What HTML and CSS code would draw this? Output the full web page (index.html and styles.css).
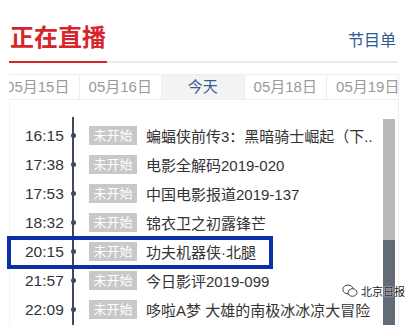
FILE: index.html
```html
<!DOCTYPE html>
<html lang="zh">
<head>
<meta charset="UTF-8">
<meta name="viewport" content="width=device-width, initial-scale=1.0">
<title>正在直播</title>
<link rel="stylesheet" href="styles.css">
</head>
<body>
<header class="top">
  <h1 class="title">正在直播</h1>
  <a class="guide">节目单</a>
</header>
<div class="tabs">
  <div class="tabs-inner">
    <div class="tab">05月15日</div>
    <div class="tab">05月16日</div>
    <div class="tab active">今天</div>
    <div class="tab">05月18日</div>
    <div class="tab">05月19日</div>
  </div>
</div>
<div class="list">
  <div class="row"><span class="time">16:15</span><span class="tag">未开始</span><span class="name">蝙蝠侠前传3：黑暗骑士崛起（下..</span></div>
  <div class="row"><span class="time">17:38</span><span class="tag">未开始</span><span class="name">电影全解码2019-020</span></div>
  <div class="row"><span class="time">17:53</span><span class="tag">未开始</span><span class="name">中国电影报道2019-137</span></div>
  <div class="row"><span class="time">18:32</span><span class="tag">未开始</span><span class="name">锦衣卫之初露锋芒</span></div>
  <div class="row mark"><span class="time">20:15</span><span class="tag">未开始</span><span class="name">功夫机器侠·北腿</span></div>
  <div class="row"><span class="time">21:57</span><span class="tag">未开始</span><span class="name">今日影评2019-099</span></div>
  <div class="row"><span class="time">22:09</span><span class="tag">未开始</span><span class="name">哆啦A梦 大雄的南极冰冰凉大冒险</span></div>
  <div class="scroll"><div class="thumb"></div></div>
</div>
<div class="watermark">
  <svg width="16" height="14" viewBox="0 0 16 14">
    <ellipse cx="6" cy="5.5" rx="5.2" ry="4.4" fill="#fff" stroke="#444" stroke-width="1"/>
    <ellipse cx="10.5" cy="8.5" rx="4.5" ry="3.8" fill="#fff" stroke="#444" stroke-width="1"/>
  </svg>
  <span>北京日报</span>
</div>
</body>
</html>
```

FILE: styles.css
```css
body { margin: 0; background: #fff; font-family: "Liberation Sans", "Noto Sans CJK SC", sans-serif; color: #333; height: 325px; overflow: hidden; position: relative; }
.top { margin: 0 15px 0 9px; height: 61px; display: flex; justify-content: space-between; align-items: flex-end; border-bottom: 2px solid #ebebeb; }
.title { margin: 0 0 -2px 0; padding: 0 1px 10px 1px; font-size: 24px; line-height: 30px; font-weight: bold; color: #d7262b; border-bottom: 2px solid #d7262b; font-family: "Noto Sans CJK SC", sans-serif; }
.guide { font-size: 16px; line-height: 20px; padding: 0 2px 10px 0; color: #2c5a96; }
.tabs { margin: 11px 14px 0 9px; height: 24px; border-top: 1px solid #eee; border-bottom: 1px solid #eee; border-right: 1px solid #eee; overflow: hidden; }
.tabs-inner { display: flex; margin-left: -12px; }
.tab { flex: 0 0 82.5px; box-sizing: border-box; border-right: 1px solid #eee; text-align: center; line-height: 24px; font-size: 15px; color: #9a9a9a; }
.tab.active { background: #f3f3f3; color: #3a5b95; }
.list { margin: 0 14px 0 9px; height: 240px; border-left: 1px solid #f2f2f2; border-right: 1px solid #eee; padding-top: 21px; position: relative; }
.list::before { content: ""; position: absolute; left: 62px; top: 17px; bottom: -20px; width: 1.5px; background: #3e4a5a; }
.row { height: 29px; display: flex; align-items: center; padding-left: 15px; position: relative; white-space: nowrap; }
.row::before { content: ""; position: absolute; left: 60.5px; top: 12px; width: 5px; height: 5px; border-radius: 50%; background: #3e4a5a; }
.time { width: 64px; font-size: 15.5px; color: #333; }
.tag { width: 48px; height: 19px; line-height: 19px; text-align: center; background: #c8c8c8; color: #fff; font-size: 13px; margin-right: 9px; }
.name { font-size: 15px; color: #333; }
.mark::after { content: ""; position: absolute; left: -3px; top: -1px; width: 258px; height: 25px; border: 4px solid #0b2fa9; }
.scroll { position: absolute; z-index: 3; left: 373px; top: 19px; width: 12px; height: 250px; background: #646b78; display: flex; flex-direction: column; }
.thumb { flex: 0 0 121px; width: 12px; background-color: #b9b9b9; }
.watermark { position: absolute; z-index: 4; left: 342px; top: 283px; display: flex; align-items: center; gap: 3px; font-size: 11px; color: #1e1e1e; text-shadow: 0 0 2px #fff, 0 0 1px #fff; font-family: "Noto Sans CJK SC", sans-serif; }
```
